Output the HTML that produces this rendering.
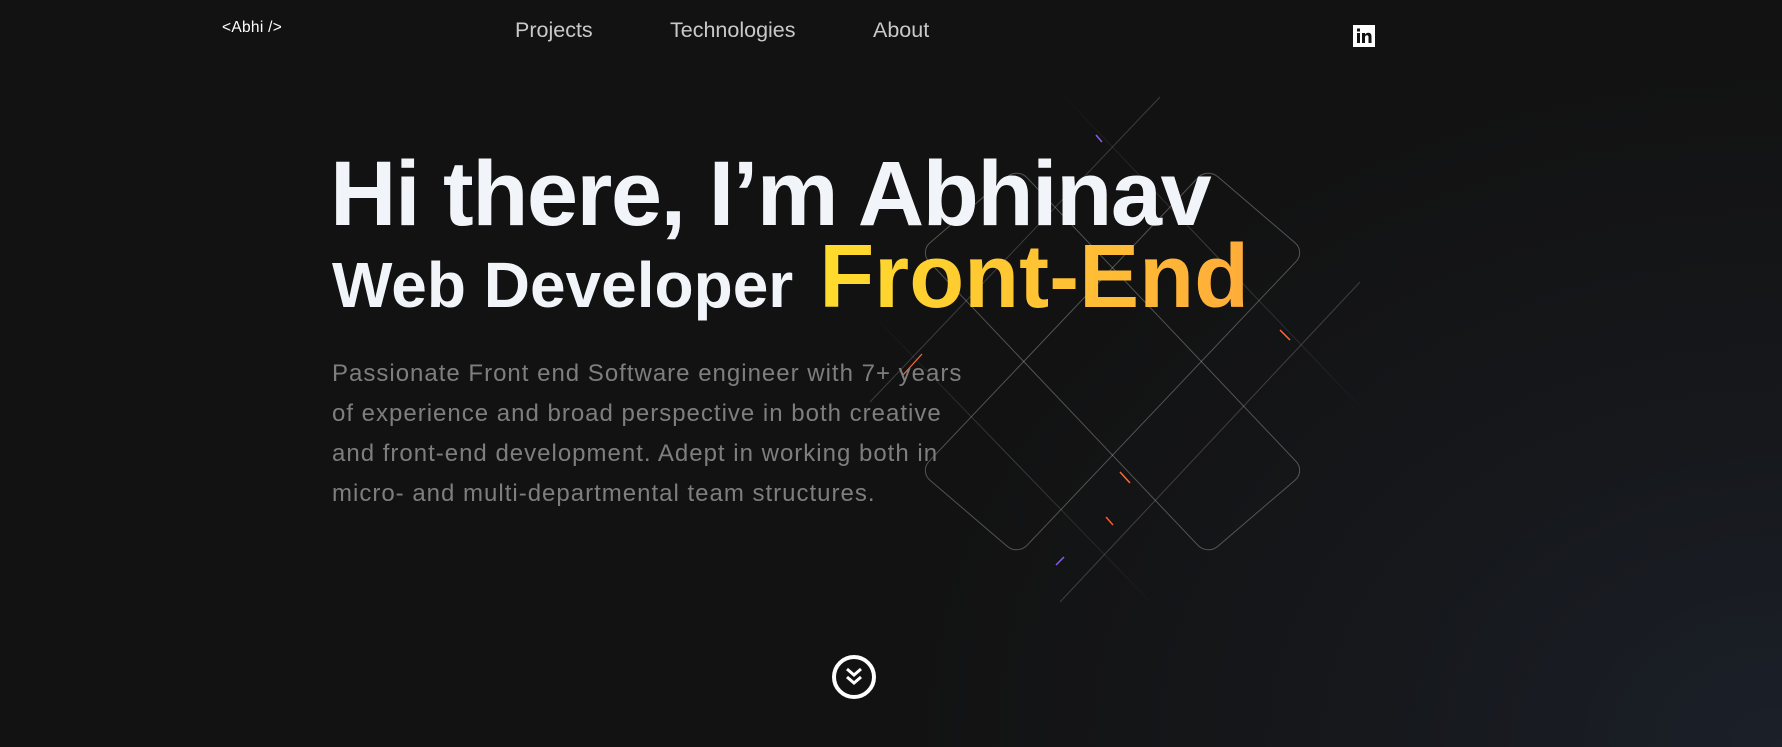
<!DOCTYPE html>
<html><head><meta charset="utf-8"><style>
html,body{margin:0;padding:0}
body{width:1782px;height:747px;overflow:hidden;position:relative;font-family:"Liberation Sans",sans-serif;
background:radial-gradient(ellipse 900px 700px at 1782px 747px,#1b2029 0%,#16181c 45%,rgba(18,18,18,0) 100%),#121212;}
.logo{position:absolute;left:222px;top:19px;color:#fff;font-size:15.5px;letter-spacing:.3px}
.nav{position:absolute;top:18px;color:#c9c9c9;font-size:21.5px}
.li{position:absolute;left:1353px;top:25px;width:22px;height:22px;background:#fff}
h1{position:absolute;left:330px;top:148px;margin:0;font-size:92px;letter-spacing:-1.5px;color:#f1f4f8;font-weight:bold;white-space:nowrap;line-height:1}
.l2{position:absolute;left:332px;top:232px;white-space:nowrap;line-height:1}
.wd{font-size:64px;font-weight:bold;color:#f1f4f8}
.fe{font-size:90px;font-weight:bold;background:linear-gradient(90deg,#ffdc2c,#ffac3a);-webkit-background-clip:text;background-clip:text;color:transparent;margin-left:26px}
p{position:absolute;left:332px;top:354px;margin:0;font-size:24px;letter-spacing:1px;line-height:40px;color:#7e7e7e;white-space:nowrap}
svg{position:absolute;left:0;top:0}
</style></head><body>
<svg width="1782" height="747">
<defs>
<linearGradient id="fl" x1="0" y1="0" x2="1" y2="1"><stop offset="0" stop-color="#fff" stop-opacity="0"/><stop offset=".5" stop-color="#fff" stop-opacity=".18"/><stop offset="1" stop-color="#fff" stop-opacity="0"/></linearGradient>
</defs>
<g transform="translate(0 -28)">
<g fill="none" stroke="rgba(255,255,255,0.28)" stroke-width="1">
<rect x="-215" y="-66" width="430" height="132" rx="14" transform="translate(1112.5 389.5) scale(1 0.95) rotate(48)"/>
<rect x="-215" y="-66" width="430" height="132" rx="14" transform="translate(1112.5 389.5) scale(1 0.95) rotate(-48)"/>
</g>
<g stroke="url(#fl)" stroke-width="1">
<line x1="1060" y1="120" x2="1370" y2="445"/>
<line x1="1160" y1="125" x2="870" y2="430"/>
<line x1="870" y1="340" x2="1160" y2="640"/>
<line x1="1360" y1="310" x2="1060" y2="630"/>
</g>
<line x1="1096" y1="163" x2="1102" y2="170" stroke="#8a5cf0" stroke-width="1.5"/>
<line x1="1280" y1="358" x2="1290" y2="368" stroke="#ff6a3a" stroke-width="1.5"/>
<line x1="1120" y1="500" x2="1130" y2="511" stroke="#ff6a3a" stroke-width="1.5"/>
<line x1="1106" y1="545" x2="1113" y2="553" stroke="#ff5a2a" stroke-width="1.5"/>
<line x1="1056" y1="593" x2="1064" y2="585" stroke="#8a5cf0" stroke-width="1.5"/>
<line x1="903" y1="403" x2="922" y2="382" stroke="#ff6a3a" stroke-width="1.2"/>
</g>
<circle cx="854" cy="677" r="20" fill="#121212" stroke="#fff" stroke-width="4"/>
<path d="M847 669 L854 675 L861 669 M847 677 L854 683 L861 677" fill="none" stroke="#fff" stroke-width="3"/>
</svg>
<div class="logo">&lt;Abhi /&gt;</div>
<div class="nav" style="left:515px">Projects</div>
<div class="nav" style="left:670px">Technologies</div>
<div class="nav" style="left:873px">About</div>
<div class="li"><svg width="22" height="22" viewBox="0 0 22 22"><rect x="4" y="8" width="3" height="10" fill="#111"/><rect x="4" y="3.5" width="3" height="3" fill="#111"/><path d="M9 8h3v1.5c.8-1.2 2-1.8 3.3-1.8 2.2 0 3.2 1.4 3.2 3.8V18h-3v-6c0-1.2-.5-1.8-1.5-1.8s-2 .7-2 2V18H9z" fill="#111"/></svg></div>
<h1>Hi there, I’m Abhinav</h1>
<div class="l2"><span class="wd">Web Developer</span><span class="fe">Front-End</span></div>
<p>Passionate Front end Software engineer with 7+ years<br>of experience and broad perspective in both creative<br>and front-end development. Adept in working both in<br>micro- and multi-departmental team structures.</p>
</body></html>
